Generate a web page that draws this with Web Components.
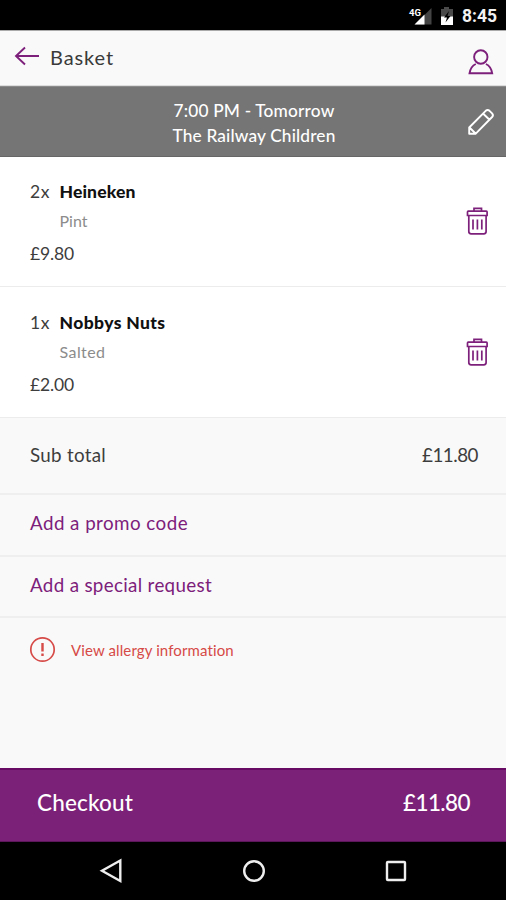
<!DOCTYPE html>
<html lang="en">
<head>
<meta charset="utf-8">
<title>Basket</title>
<style>
html,body{margin:0;padding:0}
body{width:506px;height:900px;overflow:hidden;font-family:Lato,"Open Sans","Liberation Sans",sans-serif;background:#f9f9f9}
</style>
</head>
<body>
<basket-screen></basket-screen>
<script>
const define = (name, html, setup) => {
  const template = document.createElement('template');
  template.innerHTML = html;
  customElements.define(name, class extends HTMLElement {
    connectedCallback() {
      if (this.shadowRoot) return;
      this.attachShadow({mode: 'open'}).append(template.content.cloneNode(true));
      if (setup) setup(this);
    }
  });
};

/* Text tracked out or in so that it fills the width given in pixels. */
define('tracked-text', `<style>:host{display:inline-block;white-space:nowrap}</style><slot></slot>`, el => {
  const width = +el.getAttribute('width');
  const natural = el.getBoundingClientRect().width;
  el.style.letterSpacing = ((width - natural) / el.textContent.length) + 'px';
});

define('status-bar', `<style>
:host{display:flex;height:30px;box-sizing:border-box;background:#000;color:#f2f2f2;align-items:center;justify-content:flex-end;padding:2px 9px 0 0;font:bold 17.500px Roboto,sans-serif}
svg{display:block}tracked-text{margin-left:8px}
</style>
<svg width="46" height="22" viewBox="409 5 46 22">
<path d="M432.500 8v16.500H416z" fill="#444"/><path d="M425.500 14.500v10H415.500z" fill="#fff"/>
<text x="410" y="16" font-family="Roboto" font-weight="700" font-size="9.500" fill="#fff" textLength="12" lengthAdjust="spacingAndGlyphs">4G</text>
<path d="M442 9h3V7h5v2h4v16h-12z" fill="#4a4a4a"/><path d="M442 16.500h12V25h-12z" fill="#fff"/>
<path d="M450 11l-5 6.500h3l-1.500 5 5-6.500h-3z" fill="#000"/>
</svg><tracked-text width="35">8:45</tracked-text>`);

define('app-header', `<style>
:host{display:flex;height:56px;box-sizing:border-box;background:#f9f9f9;border-top:1px solid #aaa;border-bottom:1px solid #ddd;align-items:center;padding:0 12px 0 14px;color:#3a3a3a;font-size:20px}
tracked-text{margin-left:10px;margin-bottom:3px}.user{margin:8px 0 0 auto}svg{fill:none;stroke:#7d207b;stroke-width:1.900}
.back{margin-bottom:4px}
</style>
<svg class="back" width="26" height="22" viewBox="14 45 26 22"><path d="M39 56H16M25 47.500L16 56l9 8.500"/></svg>
<tracked-text width="64">Basket</tracked-text>
<svg class="user" width="26" height="28" viewBox="467.500 48 26 28"><circle cx="480.300" cy="57" r="6.700"/><path d="M475.300 64c-3.500 1.500-5.500 4.500-6.300 9.300h22.700c-.8-4.800-2.800-7.800-6.300-9.300"/></svg>`);

define('slot-banner', `<style>
:host{display:grid;grid-template-columns:40px 1fr 40px;align-items:center;height:71px;box-sizing:border-box;background:#757575;border-top:1px solid #8b8b8b;border-bottom:1px solid #666;color:#fff;font-size:17.300px;font-weight:500}
.lines{grid-column:2;display:flex;flex-direction:column;align-items:center;line-height:24.500px;padding-top:4px;padding-left:2px}
svg{fill:none;stroke:#fff;stroke-width:1.900;stroke-linejoin:round;display:block}
</style>
<div class="lines"><tracked-text width="161">7:00 PM - Tomorrow</tracked-text><tracked-text width="163">The Railway Children</tracked-text></div>
<svg width="30" height="30" viewBox="466 106 30 30"><path d="M469.200 132.800v-6.300l16.500-16.700q2-1.700 3.800 0l2.600 2.600q1.700 1.800 0 3.600L475.500 132.800zM483 112.500l6.500 6.300M469.500 126.500l6 6"/></svg>`);

define('basket-item', `<style>
:host{display:flex;height:130px;box-sizing:border-box;background:#fff;border-bottom:1px solid #ececec;padding:18.500px 16px 0 30px;color:#3d3d3d;font-size:17.500px;line-height:31px}
:host([last]){height:131px;padding-top:19.500px}
.info{flex:1}.row{display:flex}.qty{width:29.500px}
::slotted([slot=name]){font-weight:900;color:#111}
::slotted([slot=option]){font-size:16px;color:#8c8c8c}
.option{padding-left:29.500px;height:31px;line-height:28px}.price{height:31px}
svg{fill:none;stroke:#7d207b;stroke-width:1.700;margin-top:30px}
</style>
<div class="info"><div class="row"><div class="qty"><slot name="qty"></slot></div><slot name="name"></slot></div>
<div class="option"><slot name="option"></slot></div><div class="price"><slot name="price"></slot></div></div>
<svg width="26" height="30" viewBox="464 206 26 30"><path d="M467.500 215.500V212q0-.8.800-.8h18q.8 0 .8.800v3.500zM474 211v-2.700h7.500v2.700M468.800 216v15.500q0 2.300 2.300 2.300h12.700q2.300 0 2.300-2.300V216M473 219.500v10M477.400 219.500v10M481.800 219.500v10"/></svg>`);

define('sub-total', `<style>
:host{display:flex;justify-content:space-between;height:77px;box-sizing:border-box;border-bottom:2px solid #efefef;padding:0 28px 0 30px;line-height:73px;font-size:18.800px;color:#3d3d3d}
</style><tracked-text width="76">Sub total</tracked-text><tracked-text width="56">£11.80</tracked-text>`);

define('action-row', `<style>
:host{display:block;height:61.500px;box-sizing:border-box;border-bottom:2px solid #efefef;padding-left:30px;line-height:56.500px;font-size:18.800px;color:#7d207b}
</style><slot></slot>`);

define('allergy-link', `<style>
:host{display:flex;align-items:center;height:62px;padding-left:29px;color:#d64a47;font-size:15px}
tracked-text{margin:2px 0 0 15px}svg{fill:none;stroke:#d64a47;stroke-width:1.700}
</style>
<svg width="27" height="27" viewBox="0 0 27 27"><circle cx="13.500" cy="13.500" r="11.700"/><path d="M13.500 7v8.500M13.500 17.500v2.500" stroke-width="2.400"/></svg>
<tracked-text width="163">View allergy information</tracked-text>`);

define('checkout-bar', `<style>
:host{display:flex;justify-content:space-between;height:74px;box-sizing:border-box;background:#7b2178;border-top:2px solid #670b64;border-bottom:1px solid #5b1759;padding:0 36px 0 37px;line-height:65px;font-size:22.500px;font-weight:500;color:#fff}
</style><tracked-text width="96">Checkout</tracked-text><tracked-text width="67">£11.80</tracked-text>`);

define('nav-bar', `<style>
:host{display:flex;height:58px;background:#000;align-items:center;justify-content:space-between;padding:0 97px 0 98px}
svg{fill:none;stroke:#eee;stroke-width:2.400;display:block}
</style>
<svg width="26" height="26" viewBox="0 0 26 26"><path d="M22.300 2.500v20.500L4 12.800z"/></svg>
<svg width="26" height="26" viewBox="0 0 26 26"><circle cx="13" cy="13" r="9.800"/></svg>
<svg width="26" height="26" viewBox="0 0 26 26"><rect x="4" y="4" width="18" height="18" rx=".8"/></svg>`);

define('basket-screen', `<style>
:host{display:flex;flex-direction:column;width:506px;height:900px;background:#f9f9f9}
:host>*{flex:none}.spacer{flex:1}
</style>
<status-bar></status-bar>
<app-header></app-header>
<slot-banner></slot-banner>
<basket-item>
<tracked-text slot="qty" width="20">2x</tracked-text><tracked-text slot="name" width="76">Heineken</tracked-text>
<tracked-text slot="option" width="28">Pint</tracked-text><tracked-text slot="price" width="44">£9.80</tracked-text>
</basket-item>
<basket-item last>
<tracked-text slot="qty" width="20">1x</tracked-text><tracked-text slot="name" width="106">Nobbys Nuts</tracked-text>
<tracked-text slot="option" width="46">Salted</tracked-text><tracked-text slot="price" width="44">£2.00</tracked-text>
</basket-item>
<sub-total></sub-total>
<action-row><tracked-text width="158">Add a promo code</tracked-text></action-row>
<action-row><tracked-text width="182">Add a special request</tracked-text></action-row>
<allergy-link></allergy-link>
<div class="spacer"></div>
<checkout-bar></checkout-bar>
<nav-bar></nav-bar>`);
</script>
</body>
</html>
